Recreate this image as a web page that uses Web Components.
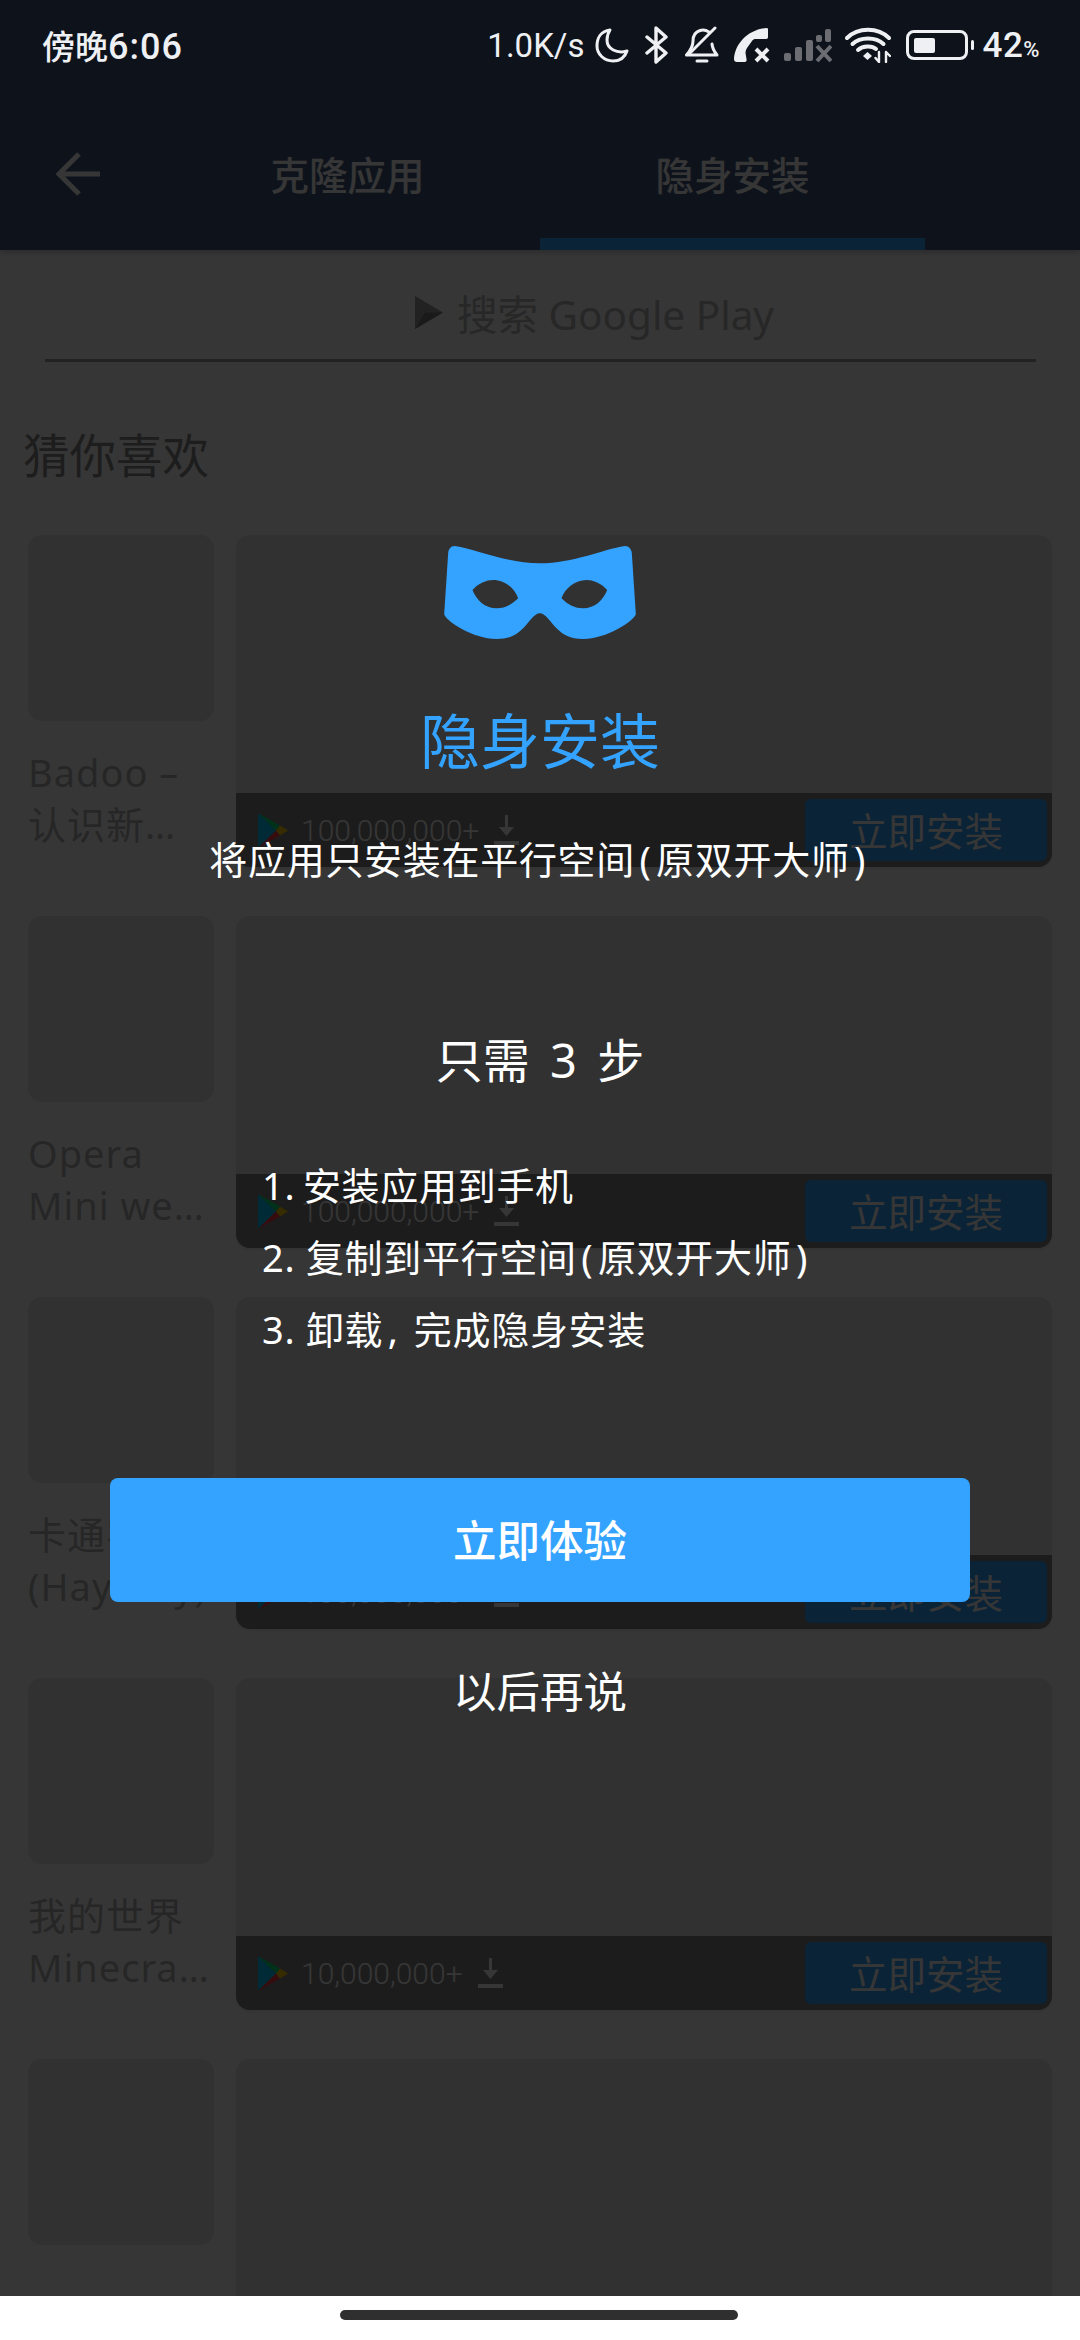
<!DOCTYPE html>
<html lang="zh">
<head>
<meta charset="utf-8">
<title>隐身安装</title>
<style>
    html, body { margin: 0; padding: 0; background: #fff; }
    body { font-family: "Noto Sans", "Noto Sans CJK SC", sans-serif; }
</style>
</head>
<body>
<app-screen>
    <status-bar></status-bar>
    <app-header></app-header>
    <store-list>
        <search-box></search-box>
        <app-row installs="100,000,000+">Badoo –<br>认识新…</app-row>
        <app-row installs="100,000,000+">Opera<br>Mini we…</app-row>
        <app-row installs="100,000,000+">卡通农场<br>(Hay Day)</app-row>
        <app-row installs="10,000,000+">我的世界<br>Minecra…</app-row>
        <app-row></app-row>
    </store-list>
    <nav-handle></nav-handle>
    <promo-dialog></promo-dialog>
</app-screen>

<script>
const PLAY_ICON = `
    <svg width="30" height="35" viewBox="0 0 30 35">
        <polygon points="0,0 18,17.5 0,35" fill="#00c4ff"/>
        <polygon points="0,0 22,12.5 18,17.5" fill="#00e87a"/>
        <polygon points="0,35 22,22.5 18,17.5" fill="#ff3a44"/>
        <polygon points="22,12.5 30,17.5 22,22.5 18,17.5" fill="#ffd000"/>
    </svg>`;

class AppScreen extends HTMLElement {
    connectedCallback() {
        this.attachShadow({ mode: 'open' });
        this.shadowRoot.innerHTML = `
            <style>
                :host {
                    display: flex;
                    flex-direction: column;
                    position: relative;
                    width: 1080px;
                    height: 2340px;
                    overflow: hidden;
                    background: #fff;
                }
            </style>
            <slot></slot>
        `;
    }
}

class StatusBar extends HTMLElement {
    connectedCallback() {
        this.attachShadow({ mode: 'open' });
        this.shadowRoot.innerHTML = `
            <style>
                :host {
                    position: absolute;
                    top: 0;
                    left: 0;
                    right: 0;
                    z-index: 2;
                    height: 90px;
                    display: flex;
                    align-items: center;
                    justify-content: space-between;
                    padding: 0 40px 0 42px;
                    box-sizing: border-box;
                    color: #eef0f3;
                    font-family: Roboto, "Noto Sans CJK SC", sans-serif;
                }
                .time { font-size: 33px; font-weight: 500; }
                .time span { font-size: 36px; letter-spacing: 1px; }
                .right { display: flex; align-items: center; }
                .speed { font-size: 33px; margin-right: 10px; }
                svg { display: block; }
                .pct { font-size: 35px; font-weight: 500; margin-left: 9px; letter-spacing: 0.5px; }
                .pct small { font-size: 22px; }
            </style>
            <div class="time">傍晚<span>6:06</span></div>
            <div class="right">
                <span class="speed">1.0K/s</span>
                <svg width="34" height="36" viewBox="0 0 34 36" fill="none" stroke="#eef0f3" stroke-width="3" stroke-linejoin="round">
                    <path d="M15 3C6 4 2 11 2 19C2 27 9 34 18 34C25 34 30 30 32 24C22 27 12 22 12 13C12 9 13 6 15 3Z"/>
                </svg>
                <svg style="margin-left:16px" width="24" height="38" viewBox="0 0 24 38" fill="none" stroke="#eef0f3" stroke-width="3.4" stroke-linecap="round" stroke-linejoin="round">
                    <polyline points="2,11 21,27 11,36 11,2 21,11 2,27"/>
                </svg>
                <svg style="margin-left:16px" width="34" height="38" viewBox="0 0 34 38" fill="none" stroke="#eef0f3" stroke-width="3" stroke-linecap="round" stroke-linejoin="round">
                    <path d="M24 6C21 4 18 3.500 15 4.500C10 6 8 10 8 15C8 21 5 25 1.500 29H32C29.500 26 27.500 23 27 18"/>
                    <path d="M12 35H22"/>
                    <path d="M5 27L30 2"/>
                </svg>
                <svg style="margin-left:15px" width="36" height="35" viewBox="0 0 36 35">
                    <path d="M33 0C15 1 1 15 0 31C0 33 1 34 3 34H10C12 34 13 33 12.500 31L11.500 25C11.500 23 12 22 13 20L18 13C19 11.500 20 11 22 11H32C33.500 11 34 10 34 9V2C34 1 34 0 33 0Z" fill="#eef0f3"/>
                    <path d="M22 21L34 33M34 21L22 33" stroke="#eef0f3" stroke-width="4" fill="none"/>
                </svg>
                <svg style="margin-left:14px" width="48" height="34" viewBox="0 0 48 34">
                    <g fill="#6b6d72">
                        <rect x="0" y="25" width="7" height="8" rx="2"/>
                        <rect x="11" y="19" width="7" height="14" rx="2"/>
                        <rect x="22" y="12" width="7" height="21" rx="2"/>
                        <rect x="32" y="7" width="6" height="7" rx="2"/>
                        <rect x="41" y="1" width="6" height="13" rx="2"/>
                    </g>
                    <path d="M33 18L47 33M47 18L33 33" stroke="#6b6d72" stroke-width="4" fill="none"/>
                </svg>
                <svg style="margin-left:13px" width="46" height="36" viewBox="0 0 46 36" fill="none" stroke="#eef0f3" stroke-linecap="round">
                    <path d="M2 11C13 0 33 0 44 11" stroke-width="4"/>
                    <path d="M7.500 17C15 9.500 31 9.500 38.500 17" stroke-width="4"/>
                    <path d="M13 23C18 18.500 27 18.500 31 22" stroke-width="4"/>
                    <path d="M18 29L22.500 25L27 29L22.500 33Z" fill="#eef0f3" stroke="none"/>
                    <path d="M34 25V35M30.500 31L34 35M41 35V25M41 25L45 29" stroke-width="2.400"/>
                </svg>
                <svg style="margin-left:15px" width="68" height="30" viewBox="0 0 68 30">
                    <rect x="1.500" y="1.500" width="59" height="27" rx="6.500" fill="none" stroke="#eef0f3" stroke-width="3"/>
                    <rect x="8" y="8" width="21" height="15" rx="2" fill="#eef0f3"/>
                    <rect x="65" y="10" width="3" height="10" rx="1.500" fill="#eef0f3"/>
                </svg>
                <span class="pct">42<small>%</small></span>
            </div>
        `;
    }
}

class AppHeader extends HTMLElement {
    connectedCallback() {
        this.attachShadow({ mode: 'open' });
        this.shadowRoot.innerHTML = `
            <style>
                :host {
                    display: flex;
                    flex: none;
                    height: 250px;
                    padding-top: 90px;
                    box-sizing: border-box;
                    background: #435a80;
                    color: #fff;
                    box-shadow: 0 2px 6px rgba(0, 0, 0, 0.25);
                    position: relative;
                }
                .back {
                    width: 155px;
                    padding: 62px 0 0 56px;
                    box-sizing: border-box;
                }
                .tab {
                    width: 385px;
                    box-sizing: border-box;
                    border-bottom: 12px solid transparent;
                    display: flex;
                    align-items: center;
                    justify-content: center;
                    padding-top: 18px;
                    font-size: 38.5px;
                    font-weight: 500;
                    font-family: "Noto Sans CJK SC", sans-serif;
                }
                .tab.active { border-bottom-color: #33a3ff; }
                svg { display: block; }
            </style>
            <div class="back">
                <svg width="44" height="44" viewBox="0 0 44 44" fill="none" stroke="#fff" stroke-width="5">
                    <path d="M44 22H3M23 2L3 22L23 42"/>
                </svg>
            </div>
            <div class="tab">克隆应用</div>
            <div class="tab active">隐身安装</div>
        `;
    }
}

class SearchBox extends HTMLElement {
    connectedCallback() {
        this.attachShadow({ mode: 'open' });
        this.shadowRoot.innerHTML = `
            <style>
                :host { display: block; }
                .field {
                    height: 112px;
                    margin: 0 44px 0 45px;
                    box-sizing: border-box;
                    border-bottom: 3px solid #a0a0a0;
                    display: flex;
                    align-items: center;
                    justify-content: center;
                    gap: 14px;
                    padding: 16px 0 0 108px;
                    color: #b8b8b8;
                    font-size: 40.5px;
                    font-family: "Noto Sans", "Noto Sans CJK SC", sans-serif;
                }
                h2 {
                    margin: 0;
                    height: 173px;
                    padding: 61px 0 0 23px;
                    box-sizing: border-box;
                    font-size: 46.5px;
                    line-height: 60px;
                    font-weight: 400;
                    color: #8a8a8a;
                    font-family: "Noto Sans CJK SC", sans-serif;
                }
            </style>
            <div class="field">
                <svg width="28" height="33" viewBox="0 0 28 33">
                    <polygon points="0,0 28,16.500 0,33" fill="#a0a0a0"/>
                    <polygon points="0,33 28,16.500 10,16.500" fill="#7a7a7a"/>
                </svg>
                <span>搜索 Google Play</span>
            </div>
            <h2>猜你喜欢</h2>
        `;
    }
}

class StoreList extends HTMLElement {
    connectedCallback() {
        this.attachShadow({ mode: 'open' });
        this.shadowRoot.innerHTML = `
            <style>
                :host {
                    display: flex;
                    flex-direction: column;
                    flex: 1;
                    min-height: 0;
                    overflow: hidden;
                    background: #fff;
                }
            </style>
            <slot></slot>
        `;
    }
}

class AppRow extends HTMLElement {
    connectedCallback() {
        const installs = this.getAttribute('installs');
        // the last row runs under the nav bar, its bar never shows
        const bar = installs ? `
            <div class="bar">
                ${PLAY_ICON}
                <span class="count">${installs}</span>
                <svg class="dl" width="25" height="31" viewBox="0 0 25 31" fill="#fff">
                    <rect x="11" y="0" width="3" height="14"/>
                    <polygon points="5,12 20,12 12.500,21"/>
                    <rect x="0" y="26" width="25" height="4"/>
                </svg>
                <button>立即安装</button>
            </div>` : '';
        this.attachShadow({ mode: 'open' });
        this.shadowRoot.innerHTML = `
            <style>
                :host {
                    display: grid;
                    flex: none;
                    grid-template-columns: 186px 816px;
                    column-gap: 22px;
                    height: 332px;
                    margin: 0 28px 49px;
                }
                .tile {
                    width: 186px;
                    height: 186px;
                    border-radius: 14px;
                    background: #e5e5e5;
                }
                .name {
                    margin-top: 25px;
                    font-size: 38px;
                    letter-spacing: 1px;
                    line-height: 52px;
                    color: #b4b4b4;
                    white-space: nowrap;
                }
                .card {
                    border-radius: 14px;
                    background: #e5e5e5;
                    display: flex;
                    flex-direction: column;
                    justify-content: flex-end;
                    overflow: hidden;
                    box-shadow: 0 2px 3px rgba(0, 0, 0, 0.08);
                }
                .bar {
                    height: 74px;
                    background: #858585;
                    display: flex;
                    align-items: center;
                    padding: 0 5px 0 22px;
                    color: #fff;
                    font-family: Roboto, sans-serif;
                    font-weight: 300;
                    font-size: 30px;
                }
                .count { margin-left: 13px; }
                .dl { margin-left: 15px; }
                button {
                    margin-left: auto;
                    width: 242px;
                    height: 62px;
                    border: 0;
                    padding: 0 0 2px;
                    border-radius: 6px;
                    background: #33a3ff;
                    color: #fff;
                    font-size: 38.5px;
                    font-family: "Noto Sans CJK SC", sans-serif;
                }
            </style>
            <div>
                <div class="tile"></div>
                <div class="name"><slot></slot></div>
            </div>
            <div class="card">${bar}</div>
        `;
    }
}

class NavHandle extends HTMLElement {
    connectedCallback() {
        this.attachShadow({ mode: 'open' });
        this.shadowRoot.innerHTML = `
            <style>
                :host {
                    display: block;
                    flex: none;
                    height: 44px;
                    padding-top: 14px;
                    box-sizing: border-box;
                    background: #fff;
                    position: relative;
                    z-index: 2;
                }
                div {
                    width: 398px;
                    height: 10px;
                    margin-left: 340px;
                    border-radius: 5px;
                    background: #2f2f2f;
                }
            </style>
            <div></div>
        `;
    }
}

class PromoDialog extends HTMLElement {
    connectedCallback() {
        this.attachShadow({ mode: 'open' });
        this.shadowRoot.innerHTML = `
            <style>
                :host {
                    position: absolute;
                    top: 0;
                    left: 0;
                    right: 0;
                    bottom: 44px;
                    z-index: 1;
                    display: flex;
                    flex-direction: column;
                    align-items: center;
                    padding-top: 546px;
                    box-sizing: border-box;
                    background: rgba(0, 0, 0, 0.79);
                    color: #fff;
                    font-family: "Noto Sans", "Noto Sans CJK SC", sans-serif;
                }
                svg { display: block; flex: none; }
                h1 {
                    margin: 59px 0 0;
                    font-size: 60px;
                    line-height: 80px;
                    font-weight: 400;
                    color: #33a3ff;
                    font-family: "Noto Sans CJK SC", sans-serif;
                }
                .sub {
                    margin-top: 55px;
                    font-size: 38px;
                    letter-spacing: 0.7px;
                    line-height: 52px;
                    white-space: nowrap;
                }
                .p { margin: 0 4.500px; }
                .need {
                    margin-top: 145px;
                    font-size: 47px;
                    line-height: 60px;
                    word-spacing: 8px;
                }
                ol {
                    list-style: none;
                    align-self: flex-start;
                    margin: 59px 0 0 262px;
                    padding: 0;
                    font-size: 38px;
                    letter-spacing: 0.7px;
                    line-height: 72px;
                }
                li:first-child { word-spacing: -3px; }
                .primary {
                    margin-top: 113px;
                    width: 860px;
                    height: 124px;
                    border: 0;
                    padding: 0 0 4px;
                    border-radius: 8px;
                    background: #33a3ff;
                    color: #fff;
                    font-size: 43.5px;
                    font-weight: 500;
                    font-family: "Noto Sans CJK SC", sans-serif;
                }
                .later {
                    margin-top: 58px;
                    border: 0;
                    padding: 0;
                    background: none;
                    color: #fff;
                    font-size: 43.5px;
                    line-height: 60px;
                    font-family: "Noto Sans CJK SC", sans-serif;
                }
            </style>
            <svg width="192" height="93" viewBox="133 78 575 279">
                <path fill="#33a3ff" fill-rule="evenodd" d="M165 78C230 88 320 130 420 130C520 130 610 88 675 78C688 78 695 88 696 100L708 283C700 305 620 357 550 357C510 357 490 345 470 325C450 305 437 280 420 280C403 280 390 305 370 325C350 345 330 357 290 357C220 357 140 305 133 283L145 100C146 88 152 78 165 78Z
                M218 210C235 190 260 180 280 180C315 180 345 205 355 235C335 255 315 265 290 265C255 265 230 240 218 210Z
                M622 210C605 190 580 180 560 180C525 180 495 205 485 235C505 255 525 265 550 265C585 265 610 240 622 210Z"/>
            </svg>
            <h1>隐身安装</h1>
            <div class="sub">将应用只安装在平行空间<span class="p">(</span>原双开大师<span class="p">)</span></div>
            <div class="need">只需 3 步</div>
            <ol>
                <li>1. 安装应用到手机</li>
                <li>2. 复制到平行空间<span class="p">(</span>原双开大师<span class="p">)</span></li>
                <li>3. 卸载<span class="p">,</span> 完成隐身安装</li>
            </ol>
            <button class="primary">立即体验</button>
            <button class="later">以后再说</button>
        `;
    }
}

customElements.define('app-screen', AppScreen);
customElements.define('status-bar', StatusBar);
customElements.define('app-header', AppHeader);
customElements.define('search-box', SearchBox);
customElements.define('store-list', StoreList);
customElements.define('app-row', AppRow);
customElements.define('nav-handle', NavHandle);
customElements.define('promo-dialog', PromoDialog);
</script>
</body>
</html>
